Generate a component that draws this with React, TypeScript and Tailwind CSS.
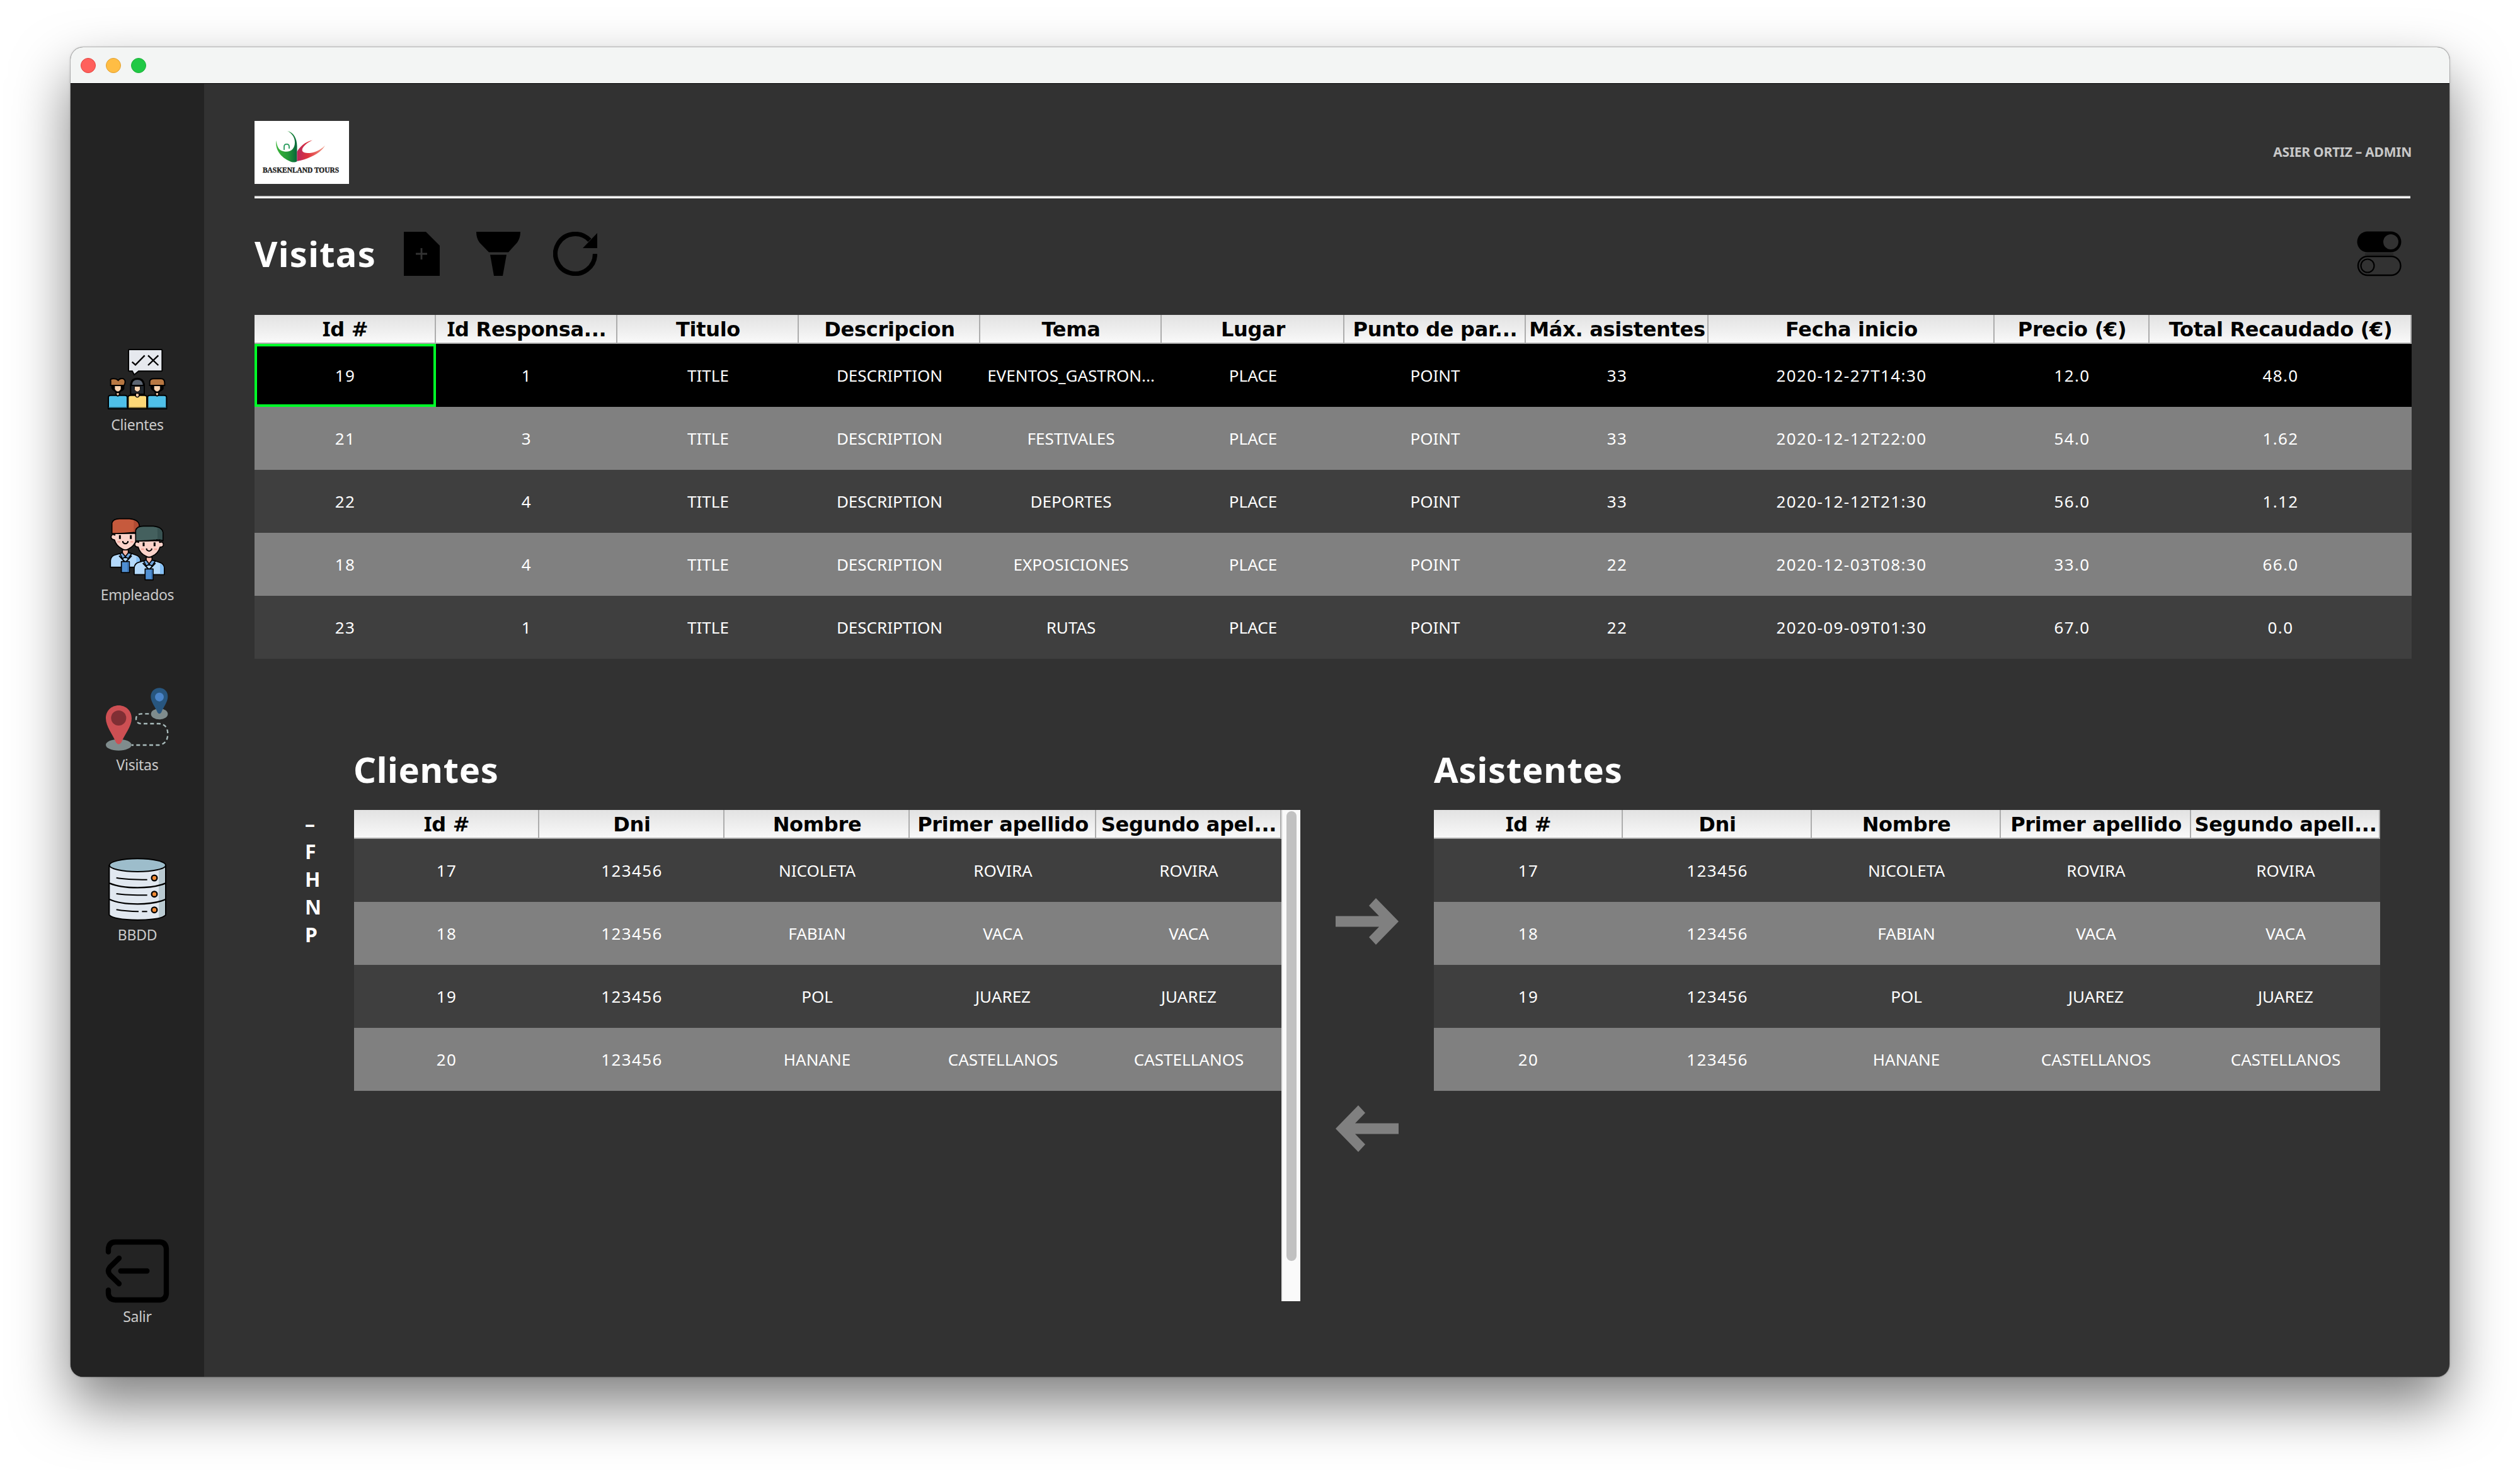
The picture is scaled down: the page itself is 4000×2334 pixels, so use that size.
import React from "react";
import clsx from "clsx";

type Column = { label: string; width: string };

const tourColumns: Column[] = [
  { label: "Id #", width: "w-[288px]" },
  { label: "Id Responsa...", width: "w-[288px]" },
  { label: "Titulo", width: "w-[288px]" },
  { label: "Descripcion", width: "w-[288px]" },
  { label: "Tema", width: "w-[288px]" },
  { label: "Lugar", width: "w-[290px]" },
  { label: "Punto de par...", width: "w-[288px]" },
  { label: "Máx. asistentes", width: "w-[290px]" },
  { label: "Fecha inicio", width: "w-[454px]" },
  { label: "Precio (€)", width: "w-[246px]" },
  { label: "Total Recaudado (€)", width: "w-[416px]" },
];

const tours = [
  ["19", "1", "TITLE", "DESCRIPTION", "EVENTOS_GASTRON...", "PLACE", "POINT", "33", "2020-12-27T14:30", "12.0", "48.0"],
  ["21", "3", "TITLE", "DESCRIPTION", "FESTIVALES", "PLACE", "POINT", "33", "2020-12-12T22:00", "54.0", "1.62"],
  ["22", "4", "TITLE", "DESCRIPTION", "DEPORTES", "PLACE", "POINT", "33", "2020-12-12T21:30", "56.0", "1.12"],
  ["18", "4", "TITLE", "DESCRIPTION", "EXPOSICIONES", "PLACE", "POINT", "22", "2020-12-03T08:30", "33.0", "66.0"],
  ["23", "1", "TITLE", "DESCRIPTION", "RUTAS", "PLACE", "POINT", "22", "2020-09-09T01:30", "67.0", "0.0"],
];

const clientColumns: Column[] = [
  { label: "Id #", width: "w-[294px]" },
  { label: "Dni", width: "w-[294px]" },
  { label: "Nombre", width: "w-[294px]" },
  { label: "Primer apellido", width: "w-[296px]" },
  { label: "Segundo apel...", width: "w-[294px]" },
];

const attendeeColumns: Column[] = [
  { label: "Id #", width: "w-[300px]" },
  { label: "Dni", width: "w-[300px]" },
  { label: "Nombre", width: "w-[300px]" },
  { label: "Primer apellido", width: "w-[302px]" },
  { label: "Segundo apell...", width: "w-[300px]" },
];

const people = [
  ["17", "123456", "NICOLETA", "ROVIRA", "ROVIRA"],
  ["18", "123456", "FABIAN", "VACA", "VACA"],
  ["19", "123456", "POL", "JUAREZ", "JUAREZ"],
  ["20", "123456", "HANANE", "CASTELLANOS", "CASTELLANOS"],
];

function Caption({ text }: { text: string }) {
  if (!text.startsWith("I")) return <span>{text}</span>;
  return (
    <span>
      <span className="font-['Noto_Sans',sans-serif] text-[33px] leading-none">I</span>
      {text.slice(1)}
    </span>
  );
}

function DataTable({ columns, rows, selected = -1 }: { columns: Column[]; rows: string[][]; selected?: number }) {
  return (
    <div className="flex flex-col">
      <div className="flex h-[46px] border-b-2 border-[#a9a9a9] bg-linear-to-b from-[#e2e2e2] to-[#f9f9f9]">
        {columns.map((c) => (
          <div
            key={c.label}
            className={clsx(
              c.width,
              "flex h-[44px] shrink-0 items-center justify-center border-r-2 border-[#adadad] pt-[2px] pl-[2px] font-['DejaVu_Sans',sans-serif] text-[32px] leading-[42px] font-bold tracking-[-0.3px] whitespace-nowrap text-black",
            )}
          >
            <Caption text={c.label} />
          </div>
        ))}
      </div>
      {rows.map((row, r) => (
        <div
          key={r}
          className={clsx(
            "flex h-[100px]",
            r === selected ? "bg-black" : r % 2 === 0 ? "bg-[#3f3f3f]" : "bg-[#808080]",
          )}
        >
          {row.map((value, i) => (
            <div
              key={i}
              className={clsx(
                columns[i].width,
                "flex shrink-0 items-center justify-center pt-px text-[26px] whitespace-nowrap text-white",
                /^\d/.test(value) && "tracking-[1.4px]",
                r === selected && i === 0 && "border-4 border-[#00ff28]",
              )}
            >
              {value}
            </div>
          ))}
        </div>
      ))}
    </div>
  );
}

function Logo() {
  return (
    <svg width="150" height="100" viewBox="0 0 150 100" className="bg-white">
      <defs>
        <linearGradient id="leaf" x1="0" x2="1">
          <stop offset="0" stopColor="#3bb53a" />
          <stop offset="0.55" stopColor="#259a38" />
          <stop offset="1" stopColor="#06663a" />
        </linearGradient>
        <linearGradient id="flame" x1="0" x2="1">
          <stop offset="0" stopColor="#b8285c" />
          <stop offset="0.4" stopColor="#e0343c" />
          <stop offset="1" stopColor="#f0a08c" />
        </linearGradient>
      </defs>
      <path
        d="M52 16C62 18 68 28 67.5 42V64C65 66 60 66 56 64C44 59 32 47 34.500 31C35.500 41 39 47.500 47 48.500C58 50 64 44 64 34C64 26 59 19 52 16Z"
        fill="url(#leaf)"
      />
      <path d="M47 46V41C47 35.500 55 35.500 55 41V44" fill="none" stroke="#259a5a" strokeWidth="1.800" />
      <path
        d="M67.500 49C71 42 80 33 92 30.500C81 36 74 43 76 48C79 53 98 53 112 39C106 50 88 60 67.500 64Z"
        fill="url(#flame)"
      />
      <text
        x="13"
        y="82"
        textLength="121"
        lengthAdjust="spacingAndGlyphs"
        fontFamily="'Liberation Serif', serif"
        fontWeight="700"
        fontSize="12"
        fill="#222"
        stroke="#222"
        strokeWidth="0.400"
      >
        BASKENLAND TOURS
      </text>
    </svg>
  );
}

function Boy({ x, hair }: { x: number; hair: string }) {
  return (
    <g transform={`translate(${x} 0)`} stroke="#000" strokeWidth="6">
      <path d="M-45 357V303Q-45 293-34 293H34Q45 293 45 303V357Z" fill="#4fc0e8" />
      <path d="M-8 278H8V290Q0 302-8 290Z" fill="#f3c9a5" />
      <path d="M-28 246H28V262Q22 270 14 272Q0 288-14 272Q-24 268-28 258Z" fill="#000" />
      <path d="M-15 244H15V264Q0 288-15 264Z" fill="#f8d3b0" strokeWidth="2" />
      <path d={hair} fill="#b87842" />
      <path d="M-44 352H44" stroke="#1d4c5e" strokeWidth="5" />
    </g>
  );
}

function ClientsIcon() {
  return (
    <svg width="160" height="127" viewBox="-6 0 480 381">
      <path d="M196 75H348Q352 75 352 80V174Q352 178 348 178H240L219 195L210 178H196Q192 178 192 174V80Q192 75 196 75Z" fill="#e6e9ee" stroke="#000" strokeWidth="6" />
      <path d="M209 134L225 148L269 103M285 103L334 150M334 103L285 150" fill="none" stroke="#000" strokeWidth="7" />
      <Boy x={141} hair="M-34 244V224Q-38 212-18 214Q-6 214 2 222Q10 210 26 214Q38 220 34 236L30 246H-34Z" />
      <Boy x={328} hair="M-35 246V228Q-34 214-16 214H18Q35 214 36 232V246Z" />
      <g stroke="#000" strokeWidth="6">
        <path d="M202 288V240Q206 212 234 212Q262 212 267 240V288Z" fill="#20262d" />
        <path d="M206 246Q206 216 234 216Q262 216 264 246Z" fill="#5c6572" />
        <path d="M190 357V303Q190 293 202 293H268Q279 293 279 303V357Z" fill="#fcd877" />
        <path d="M220 250H248V266Q234 288 220 266Z" fill="#f8d3b0" strokeWidth="3" />
        <path d="M226 284H242V298Q234 306 226 298Z" fill="#f3c9a5" strokeWidth="4" />
        <path d="M192 352H277" stroke="#6e5c2c" strokeWidth="5" />
      </g>
    </svg>
  );
}

function Employee({ x, y, hair, shade }: { x: number; y: number; hair: string; shade: string }) {
  return (
    <g transform={`translate(${x} ${y})`} stroke="#000" strokeWidth="5" strokeLinejoin="round">
      <path d="M-71 127V95Q-68 72-48 68L-20 60H24L48 68Q70 74 72 95V127Z" fill="#b3d9fb" />
      <path d="M52 76Q70 80 70 98V124H52Z" fill="#84bff5" stroke="none" />
      <path d="M-14 44H14V66L0 82L-14 66Z" fill="#f6b8a8" />
      <path d="M-26 62L-14 58L0 76L14 58L30 62L14 86L0 78L-14 86Z" fill="#6ea3dc" />
      <path d="M-50-34H50V-26Q68-34 68-14Q66-4 52-4Q44 26 14 40Q0 48-14 40Q-44 26-52-4Q-68-4-68-18Q-66-34-50-26Z" fill="#fbd3ca" />
      <path d="M-64-34V-84Q-58-104-28-104H20Q62-100 66-74V-34Q50-44 34-38Q-20-32-64-34Z" fill={hair} />
      <path d="M40-96Q62-90 63-74V-38Q50-44 40-40Z" fill={shade} stroke="none" />
      <path d="M-26-26V-8M26-26V-8" strokeWidth="9" />
      <path d="M-12 2V8Q0 22 12 8V2" fill="none" strokeWidth="6" />
      <path d="M-38 6H-24M24 6H38" stroke="#f4a79b" strokeWidth="7" />
      <path d="M-30 72L0 104L30 72" fill="none" strokeWidth="6" />
      <path d="M-19 100H19V152H-19Z" fill="#4f8fd2" />
      <path d="M10 103H17V149H10Z" fill="#3c74b4" stroke="none" />
    </g>
  );
}

function EmployeesIcon() {
  return (
    <svg width="160" height="127" viewBox="-6 0 480 381">
      <path d="M216 84Q236 82 238 98L228 108V130H214Z" fill="#a8452c" stroke="#000" strokeWidth="5" />
      <Employee x={177} y={175} hair="#c65a3d" shade="#b04c34" />
      <Employee x={290} y={210} hair="#44605e" shade="#385251" />
    </svg>
  );
}

function VisitsIcon() {
  return (
    <svg width="160" height="127" viewBox="-6 0 480 381">
      <ellipse cx="145" cy="338" rx="61" ry="27" fill="#7f8c8d" />
      <ellipse cx="339" cy="191" rx="40" ry="26" fill="#7f8c8d" />
      <path
        d="M206 339H336Q378 334 379 286Q378 238 336 237H252Q228 236 228 214Q228 190 256 190H300"
        fill="none"
        stroke="#a9bcbc"
        strokeWidth="7"
        strokeDasharray="18 13"
        strokeDashoffset="8"
      />
      <path d="M145 150C180 150 207 176 207 212C207 250 172 290 158 326Q145 344 132 326C118 290 84 250 84 212C84 176 110 150 145 150Z" fill="#cd4f53" />
      <circle cx="145" cy="210" r="36" fill="#802f34" />
      <path d="M339 67C362 67 379 84 379 108C379 134 358 158 348 184Q339 196 330 184C320 158 298 134 298 108C298 84 316 67 339 67Z" fill="#28567f" />
      <circle cx="339" cy="110" r="21" fill="#4a84c8" />
    </svg>
  );
}

function DatabaseIcon() {
  return (
    <svg width="160" height="127" viewBox="-6 0 480 381">
      <path d="M100 100V338Q120 361 235 362Q350 361 369 338V100Z" fill="#e1e8f0" />
      <path d="M336 120L367 106V336L336 352Z" fill="#b9cad1" />
      <path d="M100 100V338Q120 361 235 362Q350 361 369 338V100" fill="none" stroke="#000" strokeWidth="6" />
      <ellipse cx="235" cy="101" rx="134" ry="31" fill="#9dbdcb" stroke="#000" strokeWidth="6" />
      <path d="M102 187Q150 208 235 208Q320 208 368 187M102 264Q150 286 235 286Q320 286 368 264" fill="none" stroke="#000" strokeWidth="7" />
      <path d="M134 161Q180 170 281 170M134 237Q180 244 281 244M134 313Q180 321 240 322M256 322H281" fill="none" stroke="#000" strokeWidth="6" />
      {[162, 239, 314].map((cy) => (
        <circle key={cy} cx="315" cy={cy} r="13" fill="#f08a35" stroke="#000" strokeWidth="7" />
      ))}
    </svg>
  );
}

function ExitIcon() {
  return (
    <svg width="160" height="133" viewBox="-6 0 480 399" fill="none" stroke="#000" strokeWidth="25" strokeLinecap="round" strokeLinejoin="round">
      <path d="M96 143V130Q98 97 130 96H342Q370 98 372 130V342Q370 370 342 372H130Q98 370 96 342V325" />
      <path d="M147 173L103 216Q89 234 103 252L147 295M155 234H280" />
    </svg>
  );
}

function SideItem({ icon, label }: { icon: React.ReactNode; label: string }) {
  return (
    <div className="flex h-[270px] flex-col items-center">
      {icon}
      <span className="text-[23px] leading-[34px] tracking-[-0.3px] text-[#cacaca]">{label}</span>
    </div>
  );
}

function Sidebar() {
  return (
    <nav className="flex w-[212px] shrink-0 flex-col bg-[#232323] pt-[397px]">
      <SideItem icon={<ClientsIcon />} label="Clientes" />
      <SideItem icon={<EmployeesIcon />} label="Empleados" />
      <SideItem icon={<VisitsIcon />} label="Visitas" />
      <SideItem icon={<DatabaseIcon />} label="BBDD" />
      <div className="mt-[330px]">
        <SideItem icon={<ExitIcon />} label="Salir" />
      </div>
    </nav>
  );
}

function ToolbarIcons() {
  return (
    <div className="flex gap-[52px]">
      <svg width="70" height="70" viewBox="0 0 70 70">
        <path d="M7 0H42L64 22V70H7Z" />
        <path d="M35 26V44M26 35H44" stroke="#323232" strokeWidth="2.800" />
      </svg>
      <svg width="70" height="70" viewBox="0 0 70 70">
        <path d="M0 0H70Q70 10 65 17L51 32.500H20L5 17Q0 10 0 0ZM22 36.500H48L42 70H28Z" />
      </svg>
      <svg width="70" height="70" viewBox="0 0 70 70">
        <path d="M66.500 35A31.500 31.500 0 1 1 58 13.500" fill="none" stroke="#000" strokeWidth="7.200" />
        <path d="M70 2V26H47Z" />
      </svg>
    </div>
  );
}

function SwitchIcon() {
  return (
    <svg width="72" height="72" viewBox="0 0 72 72">
      <rect x="0.500" y="0.500" width="70" height="33" rx="16.500" />
      <circle cx="54" cy="17" r="12" fill="#323232" />
      <path d="M13 36.500H58" stroke="#222" strokeWidth="2" />
      <rect x="2" y="40" width="67.500" height="30" rx="15" fill="none" stroke="#000" strokeWidth="2.400" />
      <circle cx="17" cy="55" r="10.500" fill="none" stroke="#000" strokeWidth="2.200" />
    </svg>
  );
}

function Arrow({ flip = false }: { flip?: boolean }) {
  return (
    <svg width="100" height="74" viewBox="0 0 100 74" className={clsx(flip && "-scale-x-100")}>
      <path d="M64 0L100 37L64 74L53 62L69 45.500H0V28.500H69L53 12Z" fill="#808080" />
    </svg>
  );
}

export default function App() {
  return (
    <div className="h-[2334px] w-[4000px] overflow-hidden bg-white pt-[75px] pl-[112px] font-['Noto_Sans',sans-serif]">
      <div className="flex h-[2111px] w-[3776px] flex-col overflow-hidden rounded-[20px] bg-[#323232] shadow-[0_0_0_1px_rgba(0,0,0,0.2),0_0_4px_rgba(0,0,0,0.15),0_44px_90px_rgba(0,0,0,0.5)]">
        <header className="flex h-[58px] shrink-0 items-center gap-4 border-b border-black bg-[#f3f5f4] pl-4">
          <span className="size-6 rounded-full border border-[#e2463f] bg-[#ff605c]" />
          <span className="size-6 rounded-full border border-[#e0a030] bg-[#ffbd44]" />
          <span className="size-6 rounded-full border border-[#1eb03a] bg-[#20c945]" />
        </header>

        <div className="flex grow">
          <Sidebar />

          <main className="flex w-[3504px] flex-col pt-[59px] pl-[80px]">
            <div className="flex items-center justify-between">
              <Logo />
              <span className="text-[21px] font-bold tracking-[-0.25px] text-[#c8c8c8]">ASIER ORTIZ – ADMIN</span>
            </div>
            <div className="mt-[19px] mr-[2px] h-[4px] border-t-2 border-[#cfcfcf] bg-white" />

            <div className="mt-[38px] flex h-[100px] items-center">
              <h1 className="w-[230px] pb-[2px] text-[56px] font-bold tracking-[1.3px] text-white">Visitas</h1>
              <ToolbarIcons />
              <div className="mr-[15px] ml-auto">
                <SwitchIcon />
              </div>
            </div>

            <div className="mt-[47px]">
              <DataTable columns={tourColumns} rows={tours} selected={0} />
            </div>

            <section className="mt-[125px] flex">
              <ul className="mt-[115px] ml-[80px] w-[78px] text-[32px] leading-[44px] font-bold text-white">
                <li>–</li>
                <li>F</li>
                <li>H</li>
                <li>N</li>
                <li>P</li>
              </ul>

              <div className="w-[1502px]">
                <h2 className="-ml-[1px] h-[115px] text-[56px] leading-[100px] font-bold tracking-[0.7px] text-white">Clientes</h2>
                <div className="flex">
                  <DataTable columns={clientColumns} rows={people} />
                  <div className="h-[780px] w-[30px] border-l-2 border-[#e8e8e8] bg-[#fafafa] pt-[2px] pl-[6px]">
                    <div className="h-[714px] w-4 rounded-full bg-[#c1c1c1]" />
                  </div>
                </div>
              </div>

              <div className="flex w-[212px] flex-col items-center gap-[255px] pt-[255px]">
                <Arrow />
                <Arrow flip />
              </div>

              <div className="w-[1502px]">
                <h2 className="h-[115px] text-[56px] leading-[100px] font-bold tracking-[0.8px] text-white">Asistentes</h2>
                <DataTable columns={attendeeColumns} rows={people} />
              </div>
            </section>
          </main>
        </div>
      </div>
    </div>
  );
}
